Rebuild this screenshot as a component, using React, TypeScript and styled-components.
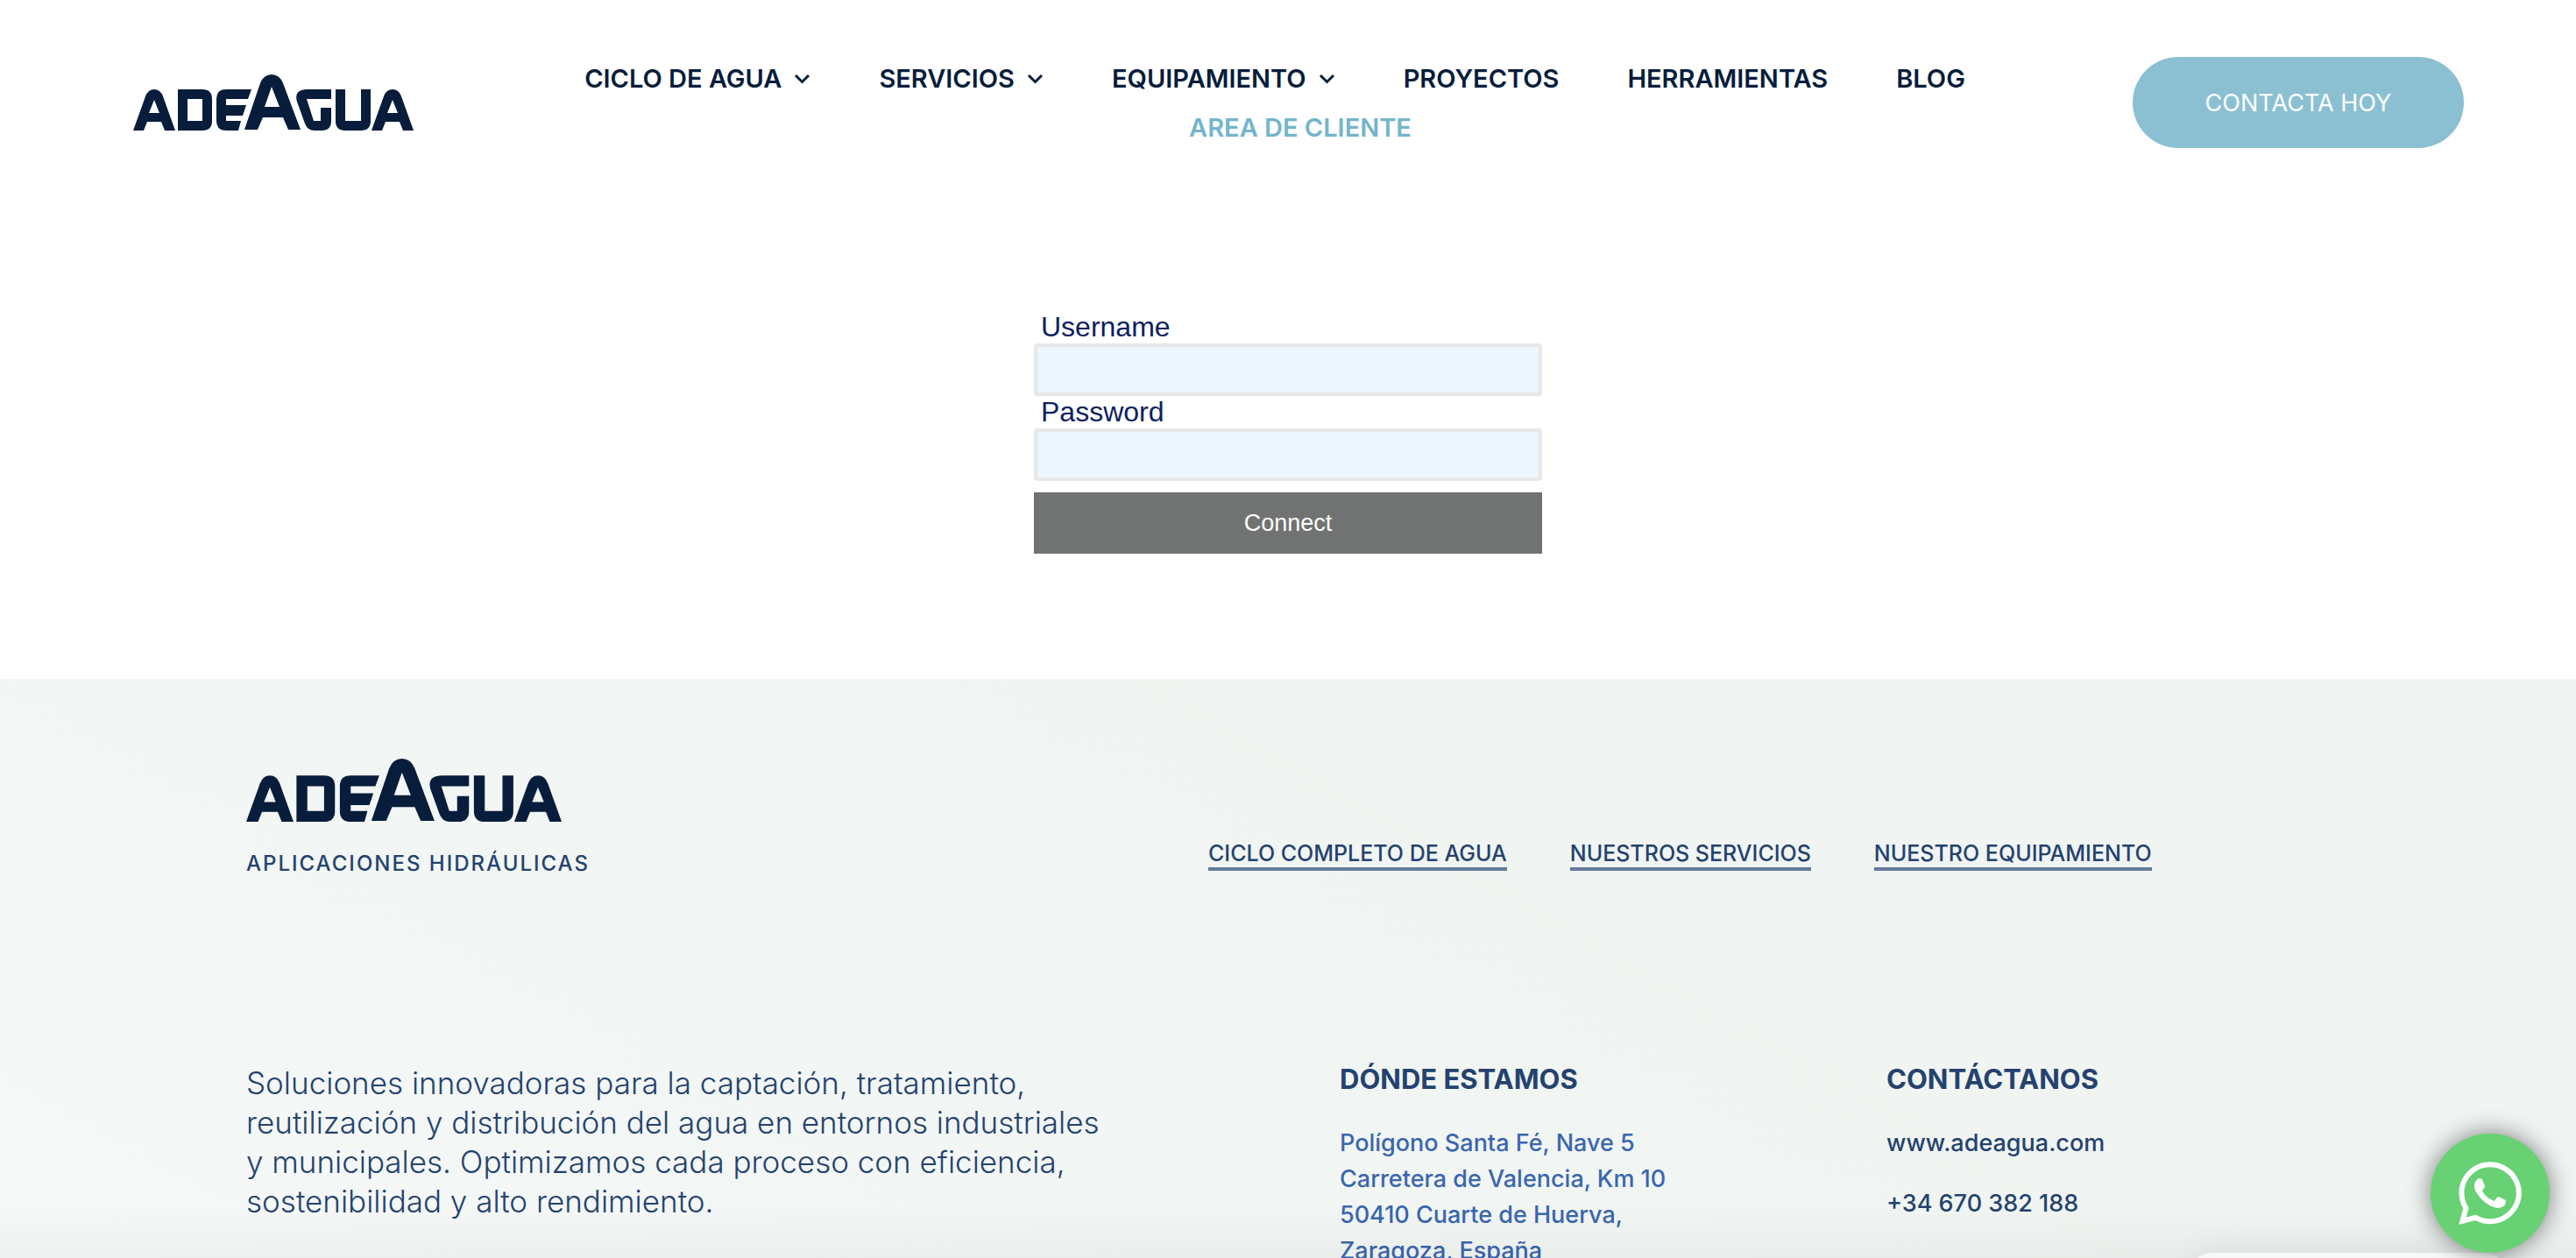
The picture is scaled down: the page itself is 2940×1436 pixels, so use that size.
import React from "react";
import styled, { createGlobalStyle } from "styled-components";
import { FaWhatsapp } from "react-icons/fa";

const GlobalStyle = createGlobalStyle`
  *, *::before, *::after { box-sizing: border-box; }
  html, body { height: 100%; }
  body {
    margin: 0;
    background: #fff;
    overflow: hidden;
    font-family: Inter, "Open Sans", sans-serif;
    color: #071d3b;
  }
  #root { height: 100%; }
  a { color: inherit; text-decoration: none; }
`;

const Page = styled.div`
  min-height: 100%;
  display: flex;
  flex-direction: column;
`;

const Header = styled.header`
  display: flex;
  align-items: flex-start;
  padding: 62px 128px 0 152px;
`;

const LogoSvg = styled.svg<{ $width: number }>`
  display: block;
  width: ${(p) => p.$width}px;
  height: auto;
  fill: #071d3b;
`;

const HomeLink = styled.a`
  display: block;
  padding-top: 23px;
`;

const Nav = styled.nav`
  flex: 1;
  margin: 0 78px 0 160px;
`;

const NavList = styled.ul`
  list-style: none;
  margin: 0;
  padding: 0;
  display: flex;
  flex-wrap: wrap;
  justify-content: center;
`;

const NavItem = styled.li<{ $active?: boolean }>`
  padding-right: ${(p) => (p.$active ? 20 : 78)}px;
  color: ${(p) => (p.$active ? "#73b5cb" : "#071d3b")};
`;

const NavLink = styled.a`
  display: flex;
  align-items: center;
  gap: 14px;
  font-size: 29px;
  font-weight: 600;
  line-height: 56px;
  white-space: nowrap;
`;

const Chevron = styled.svg`
  width: 19px;
  height: 12px;
  fill: none;
  stroke: currentColor;
  stroke-width: 3;
`;

const ContactButton = styled.button`
  margin-top: 3px;
  border: 0;
  border-radius: 52px;
  background: #8ac0d2;
  color: #fff;
  width: 378px;
  height: 104px;
  font: 400 27px Inter, sans-serif;
`;

const Main = styled.main`
  padding: 181px 24px 143px;
  display: flex;
  justify-content: center;
`;

const LoginForm = styled.form`
  width: 580px;
  display: flex;
  flex-direction: column;
  font-family: "Liberation Sans", Arial, sans-serif;
`;

const Label = styled.label`
  padding-left: 8px;
  font-size: 32px;
  line-height: 37px;
  color: #0b2161;
`;

const Input = styled.input`
  width: 100%;
  height: 60px;
  padding: 0 12px;
  border: 4px solid #e6e8e7;
  border-radius: 4px;
  background: #edf5fd;
  font: inherit;
  font-size: 28px;
`;

const SubmitButton = styled.button`
  margin-top: 13px;
  height: 70px;
  border: 0;
  background: #717372;
  color: #fff;
  font-family: inherit;
  font-size: 27px;
`;

const Footer = styled.footer`
  flex: 1;
  padding: 91px 281px 0;
  background: linear-gradient(30deg, #f6f9f8 0%, #f2f6f4 30%, #f0f5f2 60%, #f0f4f3 100%);
  color: #24426f;
`;

const FooterTop = styled.div`
  display: flex;
  align-items: flex-start;
`;

const Brand = styled.div`
  flex: 0 0 1098px;
`;

const Tagline = styled.p`
  margin: 32px 0 0;
  font-size: 24px;
  font-weight: 500;
  line-height: 32px;
  letter-spacing: 2px;
`;

const FooterLinks = styled.nav`
  display: flex;
  gap: 72px;
  padding-top: 92px;
`;

const FooterLink = styled.a`
  font-size: 25px;
  font-weight: 500;
  line-height: 32px;
  border-bottom: 4px solid #647b9b;
  white-space: nowrap;
`;

const FooterInfo = styled.div`
  display: grid;
  grid-template-columns: 1248px 624px 1fr;
  padding-top: 208px;
`;

const Summary = styled.p`
  margin: 4px 0 0;
  font-size: 35px;
  font-weight: 300;
  line-height: 45px;
`;

const InfoTitle = styled.h2`
  margin: 0 0 30px;
  font-size: 31px;
  font-weight: 700;
  line-height: 44px;
`;

const Address = styled.address`
  font-style: normal;
  font-size: 27px;
  font-weight: 500;
  line-height: 41px;
  color: #3a66ae;
`;

const ContactLink = styled.a`
  display: block;
  margin-bottom: 28px;
  font-size: 27px;
  font-weight: 500;
  line-height: 41px;
`;

const BottomShade = styled.div`
  position: fixed;
  inset: auto 0 0 0;
  height: 60px;
  background: linear-gradient(rgba(0, 0, 0, 0), rgba(0, 0, 0, 0.03));
  pointer-events: none;
`;

const ChatPanel = styled.div`
  position: fixed;
  right: 80px;
  bottom: -54px;
  width: 360px;
  height: 60px;
  border-radius: 24px;
  background: #f8f8f8;
  box-shadow: 0 0 40px rgba(0, 0, 0, 0.08);
`;

const WhatsAppButton = styled.button`
  position: fixed;
  right: 30px;
  bottom: 6px;
  width: 136px;
  height: 136px;
  display: grid;
  place-items: center;
  border: 0;
  border-radius: 50%;
  background: #67d174;
  color: #fff;
  box-shadow: 0 0 28px rgba(0, 0, 0, 0.5);
`;

const LETTER_A =
  "M0 64L14 25Q17 17 24 17Q31 17 34 25L48 64H36L32 54H16L12 64ZM18 44H30L24 29Z";

function Logo({ width }: { width: number }) {
  return (
    <LogoSvg $width={width} viewBox="0 0 320 64" role="img" aria-label="AdeAgua" fillRule="evenodd">
      <path d={LETTER_A} />
      <path d="M51 17H79Q90 17 90 28V53Q90 64 79 64H51ZM62 28V53H79V28Z" />
      <path d="M106 17H135L131 28H106V35H129L125 47H106V53H123L120 64H106Q95 64 95 53V28Q95 17 106 17Z" />
      <path d="M127 63L145 10Q149 0 158 0Q167 0 171 10L191 63H177L171 49H148L142 63ZM150 37H167L158 14Z" />
      <path d="M199 17H226V28H198L206 53H214V38H226V53Q226 64 215 64H207Q199 64 196 56L187 31Q183 17 199 17Z" />
      <path d="M231 17H242V53H260V17H271V53Q271 64 260 64H242Q231 64 231 53Z" />
      <path d={LETTER_A} transform="translate(272 0)" />
    </LogoSvg>
  );
}

const NAV_ITEMS = [
  { label: "CICLO DE AGUA", menu: true },
  { label: "SERVICIOS", menu: true },
  { label: "EQUIPAMIENTO", menu: true },
  { label: "PROYECTOS" },
  { label: "HERRAMIENTAS" },
  { label: "BLOG" },
  { label: "AREA DE CLIENTE", active: true },
];

const FOOTER_LINKS = ["CICLO COMPLETO DE AGUA", "NUESTROS SERVICIOS", "NUESTRO EQUIPAMIENTO"];

export default function App() {
  return (
    <Page>
      <GlobalStyle />
      <Header>
        <HomeLink href="#">
          <Logo width={320} />
        </HomeLink>
        <Nav>
          <NavList>
            {NAV_ITEMS.map((item) => (
              <NavItem key={item.label} $active={item.active}>
                <NavLink href="#">
                  {item.label}
                  {item.menu && (
                    <Chevron viewBox="0 0 19 12" aria-hidden="true">
                      <path d="M2 2L9.500 9.500L17 2" />
                    </Chevron>
                  )}
                </NavLink>
              </NavItem>
            ))}
          </NavList>
        </Nav>
        <ContactButton type="button">CONTACTA HOY</ContactButton>
      </Header>

      <Main>
        <LoginForm onSubmit={(e) => e.preventDefault()}>
          <Label htmlFor="username">Username</Label>
          <Input id="username" type="text" />
          <Label htmlFor="password">Password</Label>
          <Input id="password" type="password" />
          <SubmitButton type="submit">Connect</SubmitButton>
        </LoginForm>
      </Main>

      <Footer>
        <FooterTop>
          <Brand>
            <Logo width={360} />
            <Tagline>APLICACIONES HIDRÁULICAS</Tagline>
          </Brand>
          <FooterLinks>
            {FOOTER_LINKS.map((label) => (
              <FooterLink key={label} href="#">
                {label}
              </FooterLink>
            ))}
          </FooterLinks>
        </FooterTop>
        <FooterInfo>
          <Summary>
            Soluciones innovadoras para la captación, tratamiento,
            <br />
            reutilización y distribución del agua en entornos industriales
            <br />
            y municipales. Optimizamos cada proceso con eficiencia,
            <br />
            sostenibilidad y alto rendimiento.
          </Summary>
          <div>
            <InfoTitle>DÓNDE ESTAMOS</InfoTitle>
            <Address>
              Polígono Santa Fé, Nave 5<br />
              Carretera de Valencia, Km 10
              <br />
              50410 Cuarte de Huerva,
              <br />
              Zaragoza, España
            </Address>
          </div>
          <div>
            <InfoTitle>CONTÁCTANOS</InfoTitle>
            <ContactLink href="#">www.adeagua.com</ContactLink>
            <ContactLink href="#">+34 670 382 188</ContactLink>
          </div>
        </FooterInfo>
      </Footer>

      <BottomShade />
      <ChatPanel />
      <WhatsAppButton type="button" aria-label="WhatsApp">
        <FaWhatsapp size={82} />
      </WhatsAppButton>
    </Page>
  );
}
